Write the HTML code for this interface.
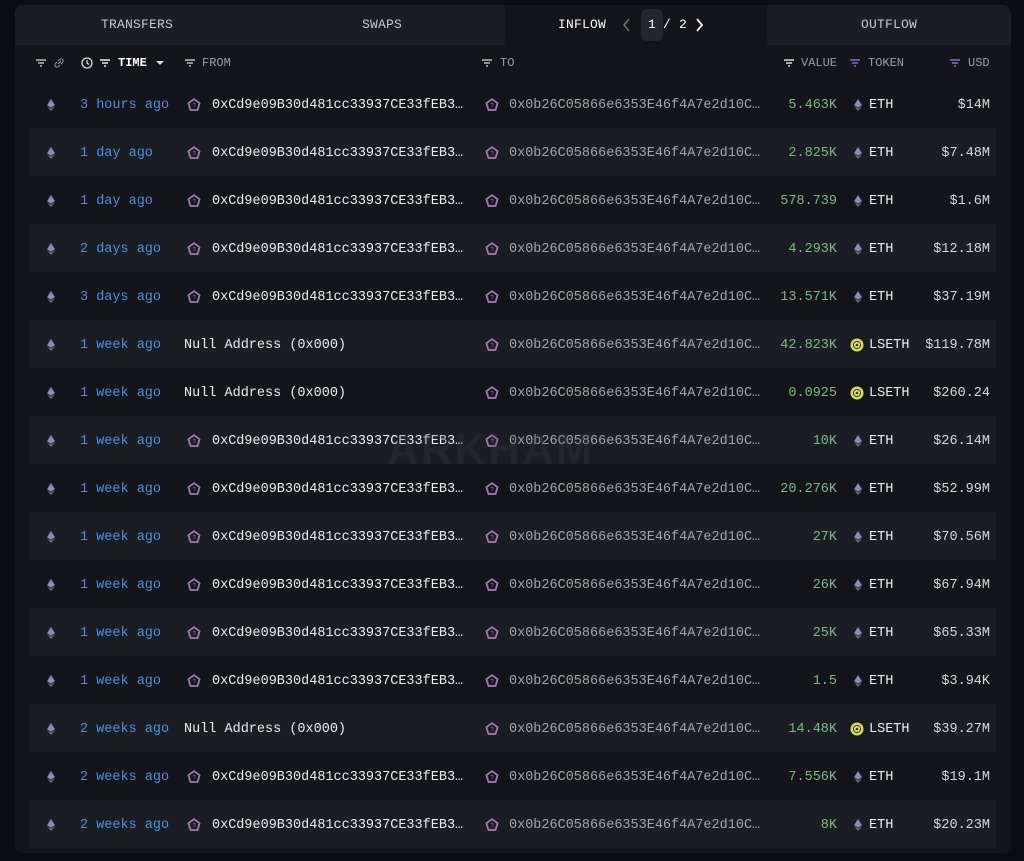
<!DOCTYPE html>
<html><head><meta charset="utf-8"><style>
*{margin:0;padding:0;box-sizing:border-box}
body{width:1024px;height:861px;background:#0b0d12;font-family:"Liberation Mono",monospace;overflow:hidden;position:relative}
.panel{position:absolute;left:15px;top:5px;width:996px;height:848px;background:#13151b;border-radius:8px;overflow:hidden}
.tabs{position:absolute;left:0;top:0;width:996px;height:40px;background:#1b1d23}
.tab{position:absolute;top:0;height:40px;line-height:40px;text-align:center;font-size:13px;color:#c8cace;letter-spacing:.2px}
.active{background:#13151b;color:#fff}
.hdr{position:absolute;top:51px;font-size:12px;color:#9a9ea6;height:14px;line-height:14px}
.row{position:absolute;left:14px;width:967px;height:48px;font-size:13.5px;line-height:48px}
.row.alt{background:#1b1d24}
.row span{position:absolute;top:2px;white-space:nowrap}
.t{left:51px;color:#4f8fdd}
.f{left:183px;color:#eceef0}
.to{left:480px;color:#a3a6ad}
.v{right:159px;color:#7fb884}
.tkn{left:840px;color:#eceef0}
.u{right:6px;color:#d6d8dc}
svg{vertical-align:middle}
.row span.ic{top:18px;line-height:0}
.eth{left:17px}
.fi{left:158px}
.ti{left:456px}
.tk{left:824px}
.wm{position:absolute;left:372px;top:420px;font-family:"Liberation Sans",sans-serif;font-weight:bold;font-size:44px;color:rgba(60,63,72,0.25);letter-spacing:2px;z-index:5}
</style></head><body>
<svg width="0" height="0" style="position:absolute"><defs>
<symbol id="pent" viewBox="0 0 14 14"><path d="M7 1.2L12.6 5.2L10.5 12H3.5L1.4 5.2Z" fill="none" stroke="#a877b6" stroke-width="1.8" stroke-linejoin="round"/><text x="7" y="9.6" font-size="6" text-anchor="middle" fill="#a877b6" font-family="Liberation Sans">?</text></symbol>
<symbol id="eth" viewBox="0 0 10 14"><path d="M5 1L9 7.2L5 9.6L1 7.2Z" fill="#8a8fb0"/><path d="M5 10.6L9 8.2L5 13L1 8.2Z" fill="#6e7294"/></symbol>
<symbol id="ls" viewBox="0 0 14 14"><circle cx="7" cy="7" r="6.5" fill="#d8dc6a"/><circle cx="7" cy="7" r="3.6" fill="none" stroke="#3a3a20" stroke-width="1"/><circle cx="7" cy="7" r="1.3" fill="#3a3a20"/></symbol>
</defs></svg>
<div class="panel">
 <div class="tabs">
  <div class="tab" style="left:0;width:244px">TRANSFERS</div>
  <div class="tab" style="left:244px;width:246px">SWAPS</div>
  <div class="tab active" style="left:490px;width:262px"><span style="position:absolute;left:53px">INFLOW</span><span style="position:absolute;left:118px;top:13px;line-height:0"><svg width="8" height="14"><path d="M6 1L1 7L6 13" stroke="#777" fill="none" stroke-width="1.4"/></svg></span><span style="position:absolute;left:136px;top:4px;width:22px;height:32px;line-height:32px;background:#23262d;border-radius:6px">1</span><span style="position:absolute;left:158px">/ 2</span><span style="position:absolute;left:190px;top:13px;line-height:0"><svg width="8" height="14"><path d="M2 1L7 7L2 13" stroke="#eee" fill="none" stroke-width="1.8"/></svg></span></div>
  <div class="tab" style="left:752px;width:244px;color:#c8cace">OUTFLOW</div>
 </div>
 <div class="wm">ARKHAM</div>
 <div class="hdr" style="left:20px"><svg width="12" height="10"><path d="M1 2h10M3 5h6M5 8h2" stroke="#bbb" stroke-width="1.4"/></svg></div>
 <div class="hdr" style="left:38px"><svg width="12" height="12"><path d="M5 7l3-3M4 5l-1.5 1.5a2 2 0 0 0 3 3L7 8M8 7l1.5-1.5a2 2 0 0 0-3-3L5 4" stroke="#999" fill="none" stroke-width="1"/></svg></div>
 <div class="hdr" style="left:66px"><svg width="12" height="12"><circle cx="6" cy="6" r="5" stroke="#ddd" fill="none" stroke-width="1.3"/><path d="M6 3v3l2 1.5" stroke="#ddd" fill="none" stroke-width="1.3"/></svg></div>
 <div class="hdr" style="left:84px"><svg width="12" height="10"><path d="M1 2h10M3 5h6M5 8h2" stroke="#eee" stroke-width="1.4"/></svg></div>
 <div class="hdr" style="left:103px;color:#fff;font-weight:bold">TIME</div>
 <div class="hdr" style="left:141px"><svg width="8" height="10"><path d="M0 3h8L4 7z" fill="#ddd"/></svg></div>
 <div class="hdr" style="left:169px"><svg width="12" height="10"><path d="M1 2h10M3 5h6M5 8h2" stroke="#bbb" stroke-width="1.4"/></svg></div>
 <div class="hdr" style="left:187px">FROM</div>
 <div class="hdr" style="left:466px"><svg width="12" height="10"><path d="M1 2h10M3 5h6M5 8h2" stroke="#bbb" stroke-width="1.4"/></svg></div>
 <div class="hdr" style="left:485px">TO</div>
 <div class="hdr" style="left:768px"><svg width="12" height="10"><path d="M1 2h10M3 5h6M5 8h2" stroke="#ddd" stroke-width="1.4"/></svg></div>
 <div class="hdr" style="left:786px">VALUE</div>
 <div class="hdr" style="left:834px"><svg width="12" height="10"><path d="M1 2h10M3 5h6M5 8h2" stroke="#8a6fd0" stroke-width="1.4"/></svg></div>
 <div class="hdr" style="left:853px">TOKEN</div>
 <div class="hdr" style="left:934px"><svg width="12" height="10"><path d="M1 2h10M3 5h6M5 8h2" stroke="#8a6fd0" stroke-width="1.4"/></svg></div>
 <div class="hdr" style="left:953px">USD</div>

<div class="row" style="top:75px"><span class="ic eth"><svg width="10" height="14"><use href="#eth"/></svg></span><span class="t">3 hours ago</span><span class="ic fi"><svg width="14" height="14"><use href="#pent"/></svg></span><span class="f">0xCd9e09B30d481cc33937CE33fEB3…</span><span class="ic ti"><svg width="14" height="14"><use href="#pent"/></svg></span><span class="to">0x0b26C05866e6353E46f4A7e2d10C…</span><span class="v">5.463K</span><span class="ic tk"><svg width="10" height="14"><use href="#eth"/></svg></span><span class="tkn">ETH</span><span class="u">$14M</span></div>
<div class="row alt" style="top:123px"><span class="ic eth"><svg width="10" height="14"><use href="#eth"/></svg></span><span class="t">1 day ago</span><span class="ic fi"><svg width="14" height="14"><use href="#pent"/></svg></span><span class="f">0xCd9e09B30d481cc33937CE33fEB3…</span><span class="ic ti"><svg width="14" height="14"><use href="#pent"/></svg></span><span class="to">0x0b26C05866e6353E46f4A7e2d10C…</span><span class="v">2.825K</span><span class="ic tk"><svg width="10" height="14"><use href="#eth"/></svg></span><span class="tkn">ETH</span><span class="u">$7.48M</span></div>
<div class="row" style="top:171px"><span class="ic eth"><svg width="10" height="14"><use href="#eth"/></svg></span><span class="t">1 day ago</span><span class="ic fi"><svg width="14" height="14"><use href="#pent"/></svg></span><span class="f">0xCd9e09B30d481cc33937CE33fEB3…</span><span class="ic ti"><svg width="14" height="14"><use href="#pent"/></svg></span><span class="to">0x0b26C05866e6353E46f4A7e2d10C…</span><span class="v">578.739</span><span class="ic tk"><svg width="10" height="14"><use href="#eth"/></svg></span><span class="tkn">ETH</span><span class="u">$1.6M</span></div>
<div class="row alt" style="top:219px"><span class="ic eth"><svg width="10" height="14"><use href="#eth"/></svg></span><span class="t">2 days ago</span><span class="ic fi"><svg width="14" height="14"><use href="#pent"/></svg></span><span class="f">0xCd9e09B30d481cc33937CE33fEB3…</span><span class="ic ti"><svg width="14" height="14"><use href="#pent"/></svg></span><span class="to">0x0b26C05866e6353E46f4A7e2d10C…</span><span class="v">4.293K</span><span class="ic tk"><svg width="10" height="14"><use href="#eth"/></svg></span><span class="tkn">ETH</span><span class="u">$12.18M</span></div>
<div class="row" style="top:267px"><span class="ic eth"><svg width="10" height="14"><use href="#eth"/></svg></span><span class="t">3 days ago</span><span class="ic fi"><svg width="14" height="14"><use href="#pent"/></svg></span><span class="f">0xCd9e09B30d481cc33937CE33fEB3…</span><span class="ic ti"><svg width="14" height="14"><use href="#pent"/></svg></span><span class="to">0x0b26C05866e6353E46f4A7e2d10C…</span><span class="v">13.571K</span><span class="ic tk"><svg width="10" height="14"><use href="#eth"/></svg></span><span class="tkn">ETH</span><span class="u">$37.19M</span></div>
<div class="row alt" style="top:315px"><span class="ic eth"><svg width="10" height="14"><use href="#eth"/></svg></span><span class="t">1 week ago</span><span class="f" style="left:155px">Null Address (0x000)</span><span class="ic ti"><svg width="14" height="14"><use href="#pent"/></svg></span><span class="to">0x0b26C05866e6353E46f4A7e2d10C…</span><span class="v">42.823K</span><span class="ic tk" style="left:821px"><svg width="14" height="14"><use href="#ls"/></svg></span><span class="tkn">LSETH</span><span class="u">$119.78M</span></div>
<div class="row" style="top:363px"><span class="ic eth"><svg width="10" height="14"><use href="#eth"/></svg></span><span class="t">1 week ago</span><span class="f" style="left:155px">Null Address (0x000)</span><span class="ic ti"><svg width="14" height="14"><use href="#pent"/></svg></span><span class="to">0x0b26C05866e6353E46f4A7e2d10C…</span><span class="v">0.0925</span><span class="ic tk" style="left:821px"><svg width="14" height="14"><use href="#ls"/></svg></span><span class="tkn">LSETH</span><span class="u">$260.24</span></div>
<div class="row alt" style="top:411px"><span class="ic eth"><svg width="10" height="14"><use href="#eth"/></svg></span><span class="t">1 week ago</span><span class="ic fi"><svg width="14" height="14"><use href="#pent"/></svg></span><span class="f">0xCd9e09B30d481cc33937CE33fEB3…</span><span class="ic ti"><svg width="14" height="14"><use href="#pent"/></svg></span><span class="to">0x0b26C05866e6353E46f4A7e2d10C…</span><span class="v">10K</span><span class="ic tk"><svg width="10" height="14"><use href="#eth"/></svg></span><span class="tkn">ETH</span><span class="u">$26.14M</span></div>
<div class="row" style="top:459px"><span class="ic eth"><svg width="10" height="14"><use href="#eth"/></svg></span><span class="t">1 week ago</span><span class="ic fi"><svg width="14" height="14"><use href="#pent"/></svg></span><span class="f">0xCd9e09B30d481cc33937CE33fEB3…</span><span class="ic ti"><svg width="14" height="14"><use href="#pent"/></svg></span><span class="to">0x0b26C05866e6353E46f4A7e2d10C…</span><span class="v">20.276K</span><span class="ic tk"><svg width="10" height="14"><use href="#eth"/></svg></span><span class="tkn">ETH</span><span class="u">$52.99M</span></div>
<div class="row alt" style="top:507px"><span class="ic eth"><svg width="10" height="14"><use href="#eth"/></svg></span><span class="t">1 week ago</span><span class="ic fi"><svg width="14" height="14"><use href="#pent"/></svg></span><span class="f">0xCd9e09B30d481cc33937CE33fEB3…</span><span class="ic ti"><svg width="14" height="14"><use href="#pent"/></svg></span><span class="to">0x0b26C05866e6353E46f4A7e2d10C…</span><span class="v">27K</span><span class="ic tk"><svg width="10" height="14"><use href="#eth"/></svg></span><span class="tkn">ETH</span><span class="u">$70.56M</span></div>
<div class="row" style="top:555px"><span class="ic eth"><svg width="10" height="14"><use href="#eth"/></svg></span><span class="t">1 week ago</span><span class="ic fi"><svg width="14" height="14"><use href="#pent"/></svg></span><span class="f">0xCd9e09B30d481cc33937CE33fEB3…</span><span class="ic ti"><svg width="14" height="14"><use href="#pent"/></svg></span><span class="to">0x0b26C05866e6353E46f4A7e2d10C…</span><span class="v">26K</span><span class="ic tk"><svg width="10" height="14"><use href="#eth"/></svg></span><span class="tkn">ETH</span><span class="u">$67.94M</span></div>
<div class="row alt" style="top:603px"><span class="ic eth"><svg width="10" height="14"><use href="#eth"/></svg></span><span class="t">1 week ago</span><span class="ic fi"><svg width="14" height="14"><use href="#pent"/></svg></span><span class="f">0xCd9e09B30d481cc33937CE33fEB3…</span><span class="ic ti"><svg width="14" height="14"><use href="#pent"/></svg></span><span class="to">0x0b26C05866e6353E46f4A7e2d10C…</span><span class="v">25K</span><span class="ic tk"><svg width="10" height="14"><use href="#eth"/></svg></span><span class="tkn">ETH</span><span class="u">$65.33M</span></div>
<div class="row" style="top:651px"><span class="ic eth"><svg width="10" height="14"><use href="#eth"/></svg></span><span class="t">1 week ago</span><span class="ic fi"><svg width="14" height="14"><use href="#pent"/></svg></span><span class="f">0xCd9e09B30d481cc33937CE33fEB3…</span><span class="ic ti"><svg width="14" height="14"><use href="#pent"/></svg></span><span class="to">0x0b26C05866e6353E46f4A7e2d10C…</span><span class="v">1.5</span><span class="ic tk"><svg width="10" height="14"><use href="#eth"/></svg></span><span class="tkn">ETH</span><span class="u">$3.94K</span></div>
<div class="row alt" style="top:699px"><span class="ic eth"><svg width="10" height="14"><use href="#eth"/></svg></span><span class="t">2 weeks ago</span><span class="f" style="left:155px">Null Address (0x000)</span><span class="ic ti"><svg width="14" height="14"><use href="#pent"/></svg></span><span class="to">0x0b26C05866e6353E46f4A7e2d10C…</span><span class="v">14.48K</span><span class="ic tk" style="left:821px"><svg width="14" height="14"><use href="#ls"/></svg></span><span class="tkn">LSETH</span><span class="u">$39.27M</span></div>
<div class="row" style="top:747px"><span class="ic eth"><svg width="10" height="14"><use href="#eth"/></svg></span><span class="t">2 weeks ago</span><span class="ic fi"><svg width="14" height="14"><use href="#pent"/></svg></span><span class="f">0xCd9e09B30d481cc33937CE33fEB3…</span><span class="ic ti"><svg width="14" height="14"><use href="#pent"/></svg></span><span class="to">0x0b26C05866e6353E46f4A7e2d10C…</span><span class="v">7.556K</span><span class="ic tk"><svg width="10" height="14"><use href="#eth"/></svg></span><span class="tkn">ETH</span><span class="u">$19.1M</span></div>
<div class="row alt" style="top:795px"><span class="ic eth"><svg width="10" height="14"><use href="#eth"/></svg></span><span class="t">2 weeks ago</span><span class="ic fi"><svg width="14" height="14"><use href="#pent"/></svg></span><span class="f">0xCd9e09B30d481cc33937CE33fEB3…</span><span class="ic ti"><svg width="14" height="14"><use href="#pent"/></svg></span><span class="to">0x0b26C05866e6353E46f4A7e2d10C…</span><span class="v">8K</span><span class="ic tk"><svg width="10" height="14"><use href="#eth"/></svg></span><span class="tkn">ETH</span><span class="u">$20.23M</span></div>
</div>
</body></html>
